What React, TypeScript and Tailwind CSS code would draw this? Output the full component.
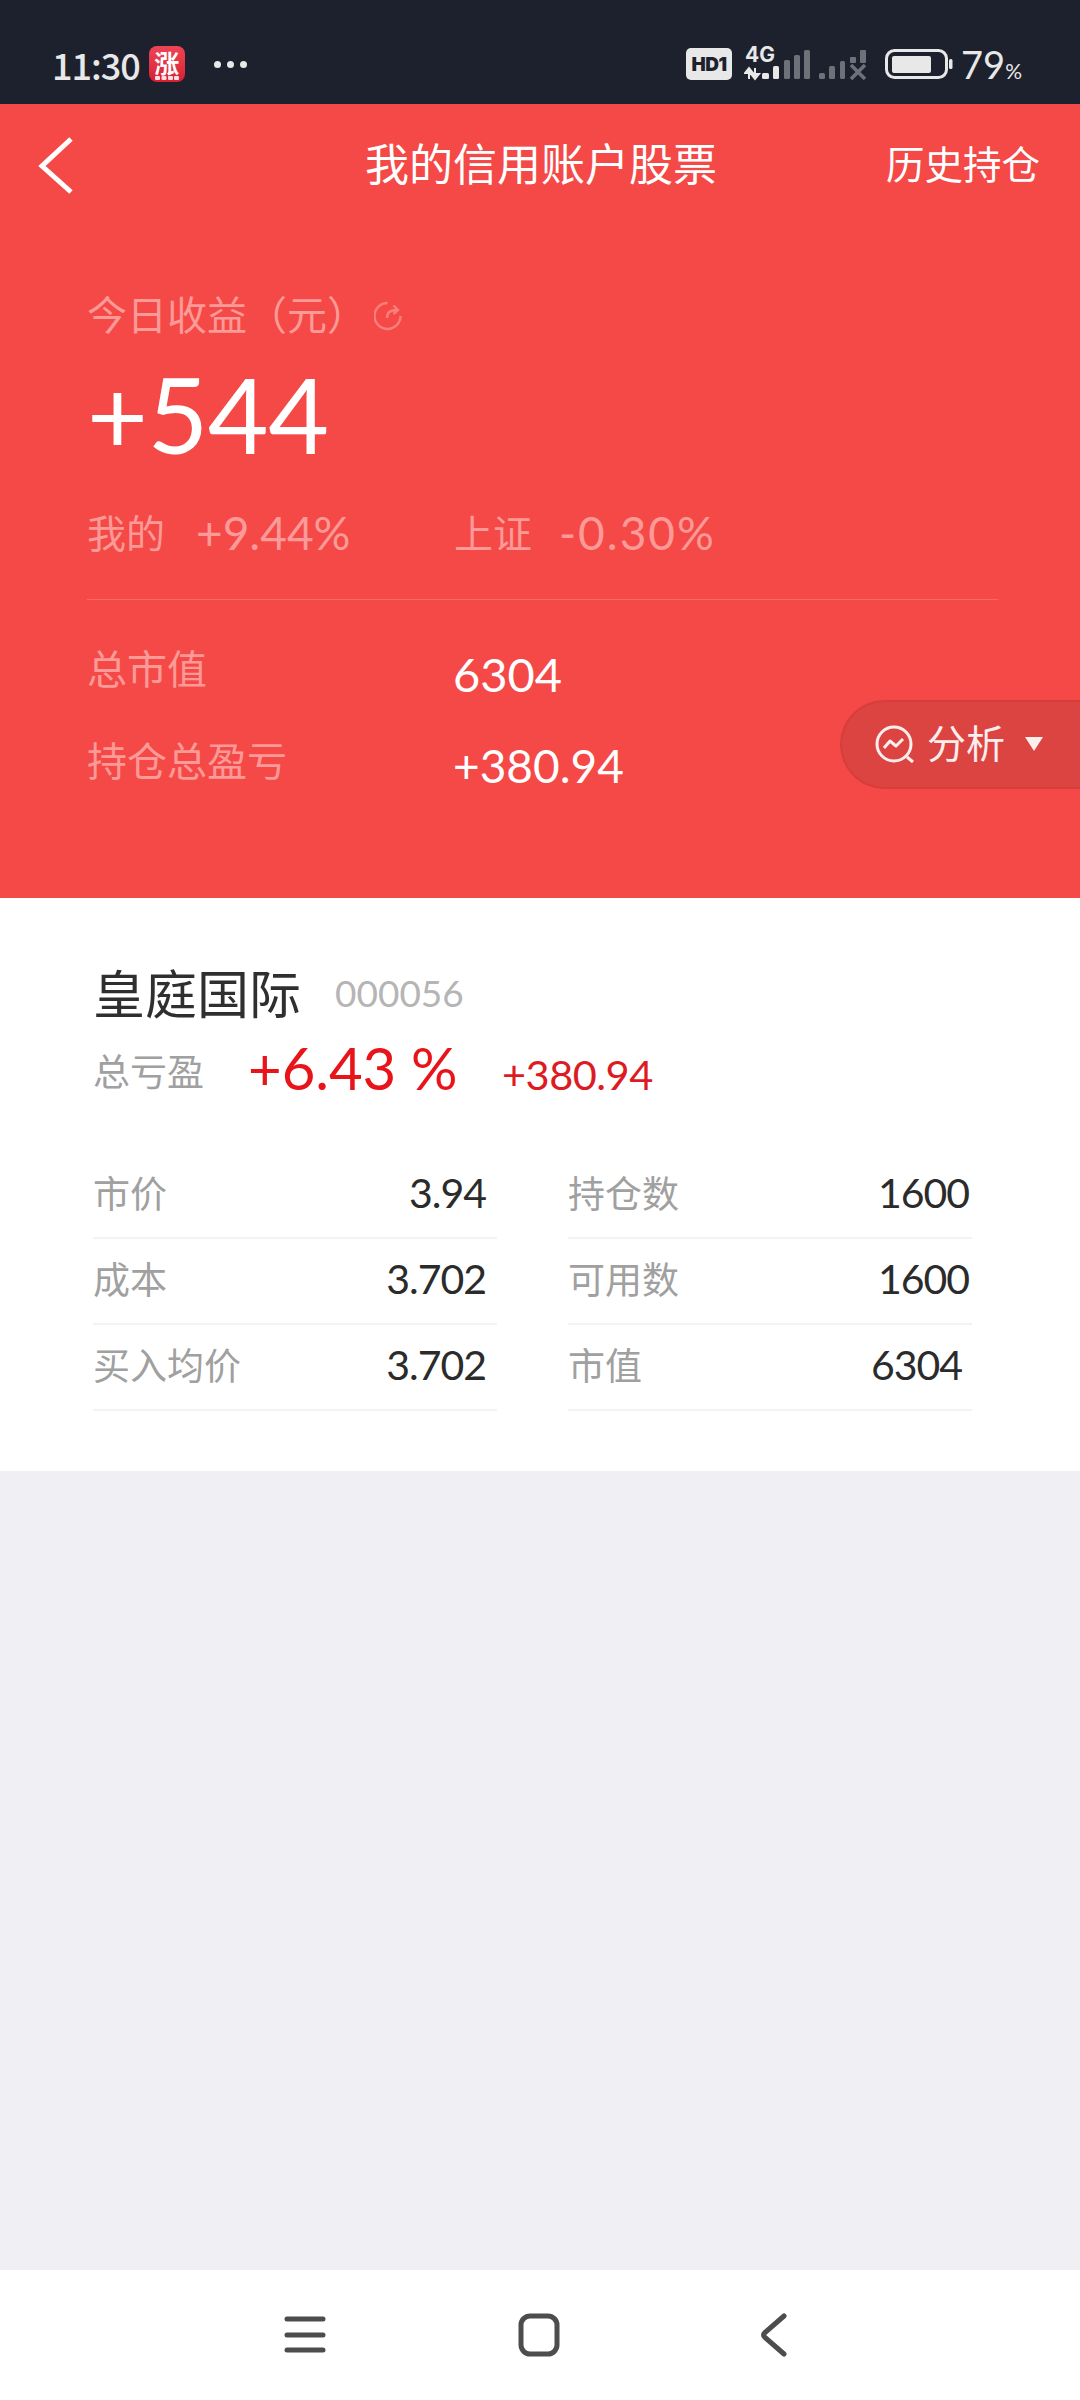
const font = "font-['Lato','Noto_Sans_CJK_SC',sans-serif]";

const rowsLeft = [
  { label: "市价", value: "3.94", inset: "pr-[11px]" },
  { label: "成本", value: "3.702", inset: "pr-[11px]" },
  { label: "买入均价", value: "3.702", inset: "pr-[11px]" },
];

const rowsRight = [
  { label: "持仓数", value: "1600", inset: "pr-[3px]" },
  { label: "可用数", value: "1600", inset: "pr-[3px]" },
  { label: "市值", value: "6304", inset: "pr-[10px]" },
];

function StatusBar() {
  return (
    <div className="h-[104px] bg-[#1d212d] flex items-center pl-[52px] pr-[58px] pt-[24px] shrink-0">
      <span className="text-[36px] leading-none text-[#e8e8e8] font-medium tracking-[-1px]">11:30</span>
      {/* app notification icon */}
      <div className="ml-[9px] w-[36px] h-[36px] rounded-[8px] bg-gradient-to-b from-[#ee4455] to-[#d81e34] flex flex-col items-center justify-center text-white">
        <span className="text-[25px] leading-[27px] font-bold">涨</span>
        <svg width="24" height="4" viewBox="0 0 24 4" fill="#fbdfe2">
          <rect x="0" y="0" width="5" height="4" rx="1" />
          <rect x="6.500" y="0" width="5" height="4" rx="1" />
          <rect x="13" y="0" width="5" height="4" rx="1" />
          <rect x="19" y="0" width="5" height="4" rx="1" />
        </svg>
      </div>
      <div className="ml-[29px] flex gap-[6px]">
        <div className="w-[7px] h-[7px] rounded-full bg-[#e8e8e8]" />
        <div className="w-[7px] h-[7px] rounded-full bg-[#e8e8e8]" />
        <div className="w-[7px] h-[7px] rounded-full bg-[#e8e8e8]" />
      </div>
      <div className="flex-1" />
      <div className="w-[46px] h-[32px] rounded-[5px] bg-[#e8e8e8] flex items-center justify-center text-[#1d212d] text-[19px] font-black leading-none font-['Inter',sans-serif] tracking-[-0.5px]">
        HD1
      </div>
      <svg width="122" height="48" viewBox="0 -4 122 48" className="ml-[12px] shrink-0">
        <text x="1" y="18" fontSize="21" fontWeight="700" fill="#e8e8e8" fontFamily="Inter, sans-serif">4G</text>
        {/* data arrows */}
        <path d="M5 24v11M1 29h8L5 24zM11 35V24M7 30h8l-4 5z" stroke="#e8e8e8" strokeWidth="2" fill="#e8e8e8" />
        {/* sim 1 */}
        <rect x="18" y="29" width="7" height="6" rx="1.5" fill="#e8e8e8" />
        <rect x="29" y="22" width="6" height="13" rx="1.5" fill="#e8e8e8" />
        <rect x="40" y="16" width="6" height="19" rx="1.5" fill="#6f7178" />
        <rect x="50" y="11" width="6" height="24" rx="1.5" fill="#6f7178" />
        <rect x="60" y="6" width="6" height="29" rx="1.5" fill="#6f7178" />
        {/* sim 2 */}
        <rect x="75" y="29" width="6" height="6" rx="1.5" fill="#6f7178" />
        <rect x="85" y="22" width="6" height="13" rx="1.5" fill="#6f7178" />
        <rect x="96" y="17" width="5" height="18" rx="1.5" fill="#6f7178" />
        <rect x="106" y="13" width="6" height="6" rx="1" fill="#6f7178" />
        <rect x="116" y="6" width="6" height="13" rx="1" fill="#6f7178" />
        <path d="M107 21l14 14M121 21l-14 14" stroke="#6f7178" strokeWidth="3.6" />
      </svg>
      <svg width="68" height="30" viewBox="0 0 68 30" className="ml-[19px] shrink-0">
        <rect x="1.500" y="1.500" width="60" height="27" rx="8" fill="none" stroke="#e8e8e8" strokeWidth="3" />
        <rect x="7" y="7" width="39" height="17" rx="2" fill="#e8e8e8" />
        <rect x="64" y="10" width="3.500" height="10" rx="1.500" fill="#e8e8e8" />
      </svg>
      <div className={`ml-[8px] flex items-baseline text-[#e8e8e8] ${font}`}>
        <span className="text-[38px] leading-none">79</span>
        <span className="text-[21px] leading-none">%</span>
      </div>
    </div>
  );
}

function Summary() {
  return (
    <div className="relative h-[794px] bg-[#f54947] shrink-0">
      <div className="h-[122px] flex items-center justify-between pl-[38px] pr-[40px] relative">
        <svg width="36" height="58" viewBox="0 0 36 58" fill="none">
          <path d="M33 3L4 30l29 26" stroke="#fff" strokeWidth="5" />
        </svg>
        <span className="absolute left-[365px] text-[44px] leading-none text-white -translate-y-[3px]">我的信用账户股票</span>
        <span className="text-[38.5px] leading-none text-white -translate-y-[3px]">历史持仓</span>
      </div>

      <div className="pl-[87px] pr-[82px] pt-[57px]">
        <div className="h-[60px] flex items-center text-[40px] leading-none text-[#fc9a97]">
          今日收益（元）
          <svg width="30" height="30" viewBox="0 0 30 30" fill="none" className="ml-[7px] translate-y-[3px]">
            <path d="M26.500 15A13 13 0 1 1 13.500 2" stroke="#fa7f7c" strokeWidth="2.400" />
            <path d="M13 17c0-5 3-8 10-8M19.500 4.500L24 9l-4.500 4" stroke="#fa7f7c" strokeWidth="2.400" />
          </svg>
        </div>
        <div className={`mt-[10px] h-[120px] flex items-center text-[105px] leading-none text-white tracking-[-0.5px] ${font}`}>
          +544
        </div>
        <div className={`mt-[30px] h-[60px] flex items-center text-[#fc9a97] ${font}`}>
          <div className="w-[367px] flex items-center">
            <span className="w-[109px] text-[39px] leading-none">我的</span>
            <span className="text-[46px] leading-none">+9.44%</span>
          </div>
          <span className="w-[105px] text-[39px] leading-none">上证</span>
          <span className="text-[46px] leading-none tracking-[2px]">-0.30%</span>
        </div>
        <div className="mt-[36px] h-px bg-[#fb6966]" />
        <div className="mt-[37px] h-[60px] flex items-center">
          <span className="w-[366px] text-[40px] leading-none text-[#fc9a97]">总市值</span>
          <span className={`pt-[14px] text-[47px] leading-none text-white ${font}`}>6304</span>
        </div>
        <div className="mt-[32px] h-[60px] flex items-center">
          <span className="w-[366px] text-[40px] leading-none text-[#fc9a97]">持仓总盈亏</span>
          <span className={`pt-[14px] text-[46px] leading-none text-white ${font}`}>+380.94</span>
        </div>
      </div>

      {/* analysis pill sits over the header edge */}
      <div className="absolute left-[840px] top-[596px] w-[240px] h-[89px] rounded-l-[45px] bg-[#dc4441] border-2 border-r-0 border-[#d73d3b] flex items-center pl-[32px]">
        <svg width="42" height="42" viewBox="0 0 42 42" fill="none">
          <circle cx="20" cy="20" r="17" stroke="#fdeeee" strokeWidth="3" />
          <path d="M33 33l6 5" stroke="#fdeeee" strokeWidth="3" />
          <path d="M10 24l6-7 6 5 7-7" stroke="#fdeeee" strokeWidth="3" strokeLinejoin="round" />
        </svg>
        <span className="ml-[11px] text-[39px] leading-none text-[#fdeeee] -translate-y-[3px]">分析</span>
        <svg width="18" height="14" viewBox="0 0 18 14" className="ml-[20px] -translate-y-px">
          <path d="M0 0h18L9 14z" fill="#fdeeee" />
        </svg>
      </div>
    </div>
  );
}

function Row({ label, value, inset }: { label: string; value: string; inset: string }) {
  return (
    <div className={`h-[86px] border-b-2 border-[#f3f3f5] pb-[6px] flex items-center justify-between ${inset}`}>
      <span className="text-[37px] leading-none text-[#a0a0a0]">{label}</span>
      <span className={`text-[41px] leading-none text-[#2b2b2b] tracking-[-1px] ${font}`}>{value}</span>
    </div>
  );
}

function Holding() {
  return (
    <div className="h-[573px] bg-white pl-[93px] pr-[109px] pt-[64px] shrink-0">
      <div className="h-[60px] flex items-center">
        <span className="text-[52px] leading-none text-[#2f2f2f]">皇庭国际</span>
        <span className={`ml-[34px] text-[37px] leading-none text-[#b5b5b5] ${font}`}>000056</span>
      </div>
      <div className={`mt-[16px] h-[60px] flex items-center ${font}`}>
        <span className="w-[155px] text-[37px] leading-none text-[#a0a0a0] pt-[6px]">总亏盈</span>
        <span className="w-[254px] text-[58px] leading-none text-[#e8141a]">+6.43 %</span>
        <span className="pt-[14px] text-[41.5px] leading-none text-[#dd1b22] tracking-[-0.5px]">+380.94</span>
      </div>
      <div className="mt-[55px] grid grid-cols-[404px_404px] gap-x-[71px]">
        <div className="flex flex-col">
          {rowsLeft.map((row) => (
            <Row key={row.label} {...row} />
          ))}
        </div>
        <div className="flex flex-col">
          {rowsRight.map((row) => (
            <Row key={row.label} {...row} />
          ))}
        </div>
      </div>
    </div>
  );
}

function NavBar() {
  return (
    <div className="h-[130px] bg-white flex items-center shrink-0 pl-[284px]">
      <svg width="42" height="38" viewBox="0 0 42 38" fill="none" stroke="#4d4d4d" strokeWidth="5" strokeLinecap="round">
        <path d="M3 3h36M3 19h36M3 34h36" />
      </svg>
      <svg width="42" height="44" viewBox="0 0 42 44" fill="none" className="ml-[192px]">
        <rect x="3" y="3" width="36" height="38" rx="9" stroke="#4d4d4d" strokeWidth="5" />
      </svg>
      <svg width="28" height="44" viewBox="0 0 28 44" fill="none" className="ml-[200px]">
        <path d="M24 3L4.500 20a2.500 2.500 0 0 0 0 4L24 41" stroke="#4d4d4d" strokeWidth="5" strokeLinecap="round" />
      </svg>
    </div>
  );
}

export default function App() {
  return (
    <div className="w-[1080px] h-[2400px] flex flex-col overflow-hidden bg-[#efeff4] font-['Noto_Sans_CJK_SC',sans-serif]">
      <StatusBar />
      <Summary />
      <Holding />
      <div className="flex-1" />
      <NavBar />
    </div>
  );
}
